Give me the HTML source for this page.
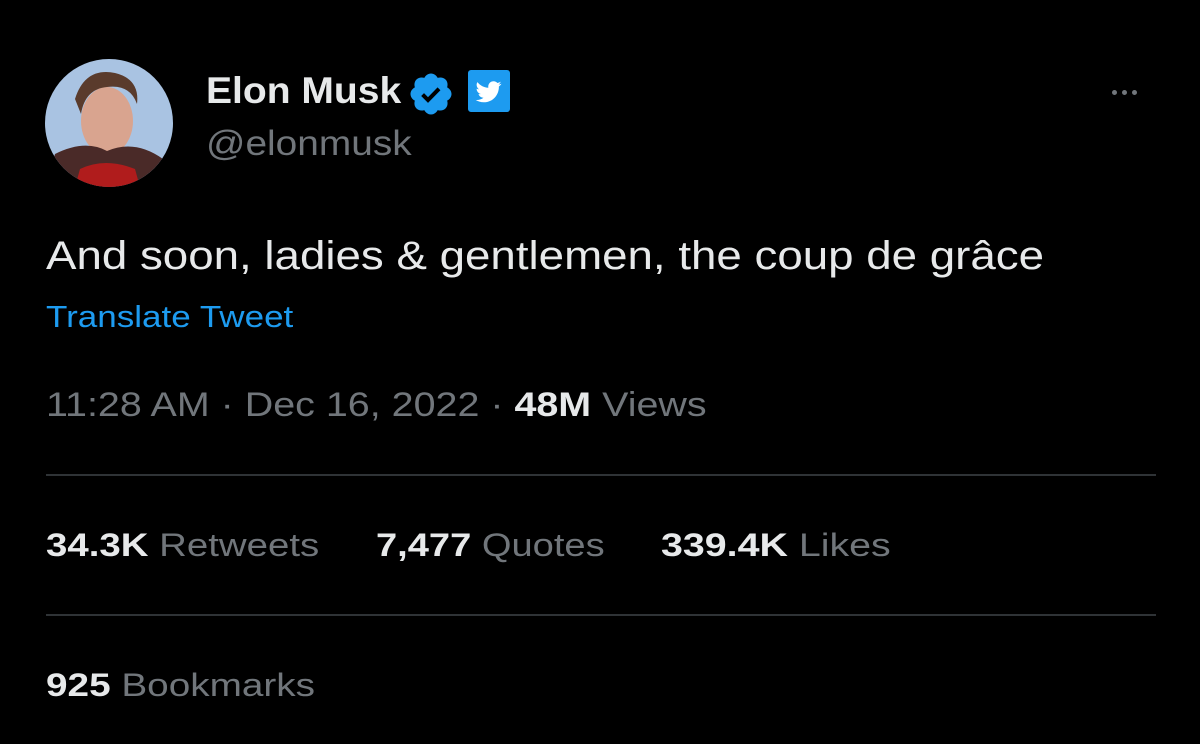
<!DOCTYPE html>
<html><head><style>
body{margin:0;width:1200px;height:744px;background:#000;overflow:hidden;font-family:"Liberation Sans",sans-serif;position:relative}
.a{position:absolute;white-space:nowrap;transform-origin:0 0}
.g{color:#71767b}
.w{color:#e7e9ea}
b{font-weight:bold;color:#e7e9ea}
.hr{position:absolute;left:46px;width:1110px;height:2px;background:#2f3336}
</style></head><body>
<div class="a" style="left:45px;top:59px;width:128px;height:128px;border-radius:50%;overflow:hidden;background:#a9c3e2">
<svg width="128" height="128"><ellipse cx="62" cy="62" rx="26" ry="34" fill="#d9a48f"/><path d="M30 40 Q40 8 70 14 Q95 20 92 45 Q85 25 62 28 Q40 30 36 55Z" fill="#5a3b2c"/><path d="M0 128 L10 95 Q40 80 62 92 Q90 80 118 100 L128 128Z" fill="#4a2a28"/><path d="M35 110 Q60 98 90 110 L95 128 L30 128Z" fill="#b01c1c"/></svg></div>
<div class="a w" style="left:206px;top:70px;font-size:37px;font-weight:bold;transform:scaleX(1.055)">Elon Musk</div>
<svg class="a" style="left:407px;top:70px" width="48" height="48" viewBox="0 0 24 24"><path fill="#1d9bf0" d="M22.25 12c0-1.43-.88-2.67-2.19-3.34.46-1.39.2-2.9-.81-3.91s-2.52-1.27-3.91-.81c-.66-1.31-1.91-2.19-3.34-2.19s-2.67.88-3.33 2.19c-1.4-.46-2.91-.2-3.92.81s-1.26 2.52-.8 3.91C2.63 9.33 1.75 10.57 1.75 12s.88 2.67 2.19 3.34c-.46 1.39-.2 2.9.81 3.91s2.52 1.26 3.91.81c.67 1.31 1.91 2.19 3.34 2.19s2.68-.88 3.34-2.19c1.39.46 2.9.2 3.91-.81s1.27-2.52.81-3.91c1.31-.67 2.19-1.91 2.19-3.34z"/><path d="M7.8 12.3l2.7 2.7 5.5-5.6" stroke="#000" stroke-width="2" fill="none"/></svg>
<div class="a" style="left:468px;top:70px;width:42px;height:42px;background:#1d9bf0;border-radius:3px"><svg width="42" height="42" viewBox="0 0 24 24"><path fill="#fff" transform="translate(4.5 5) scale(.62)" d="M23.6 4.6c-.9.4-1.8.6-2.8.8 1-.6 1.8-1.6 2.1-2.7-.9.6-2 1-3.1 1.2C19 2.9 17.7 2.3 16.3 2.3c-2.7 0-4.9 2.2-4.9 4.9 0 .4 0 .8.1 1.1C7.4 8.1 3.8 6.1 1.4 3.1c-.4.7-.7 1.6-.7 2.5 0 1.7.9 3.2 2.2 4.1-.8 0-1.6-.2-2.2-.6v.1c0 2.4 1.7 4.4 3.9 4.8-.4.1-.8.2-1.3.2-.3 0-.6 0-.9-.1.6 2 2.4 3.4 4.6 3.4-1.7 1.3-3.8 2.1-6.1 2.1-.4 0-.8 0-1.2-.1 2.2 1.4 4.8 2.2 7.5 2.2 9.1 0 14-7.5 14-14v-.6c1-.7 1.8-1.6 2.4-2.5z"/></svg></div>
<div class="a g" style="left:206px;top:124px;font-size:35px;transform:scaleX(1.11)">@elonmusk</div>
<div class="a" style="left:1112px;top:90px;font-size:0">
<span style="display:inline-block;width:5px;height:5px;border-radius:50%;background:#71767b;margin-right:5px"></span><span style="display:inline-block;width:5px;height:5px;border-radius:50%;background:#71767b;margin-right:5px"></span><span style="display:inline-block;width:5px;height:5px;border-radius:50%;background:#71767b"></span></div>
<div class="a w" style="left:46px;top:234px;font-size:40px;transform:scaleX(1.142)">And soon, ladies &amp; gentlemen, the coup de grâce</div>
<div class="a" style="left:46px;top:299px;font-size:31px;color:#1d9bf0;transform:scaleX(1.13)">Translate Tweet</div>
<div class="a g" style="left:46px;top:386px;font-size:34px;transform:scaleX(1.16)">11:28 AM · Dec 16, 2022 · <b>48M</b> Views</div>
<div class="hr" style="top:474px"></div>
<div class="a g" style="left:46px;top:527px;font-size:32px;transform:scaleX(1.2)"><b>34.3K</b> Retweets</div>
<div class="a g" style="left:376px;top:527px;font-size:32px;transform:scaleX(1.19)"><b>7,477</b> Quotes</div>
<div class="a g" style="left:661px;top:527px;font-size:32px;transform:scaleX(1.23)"><b>339.4K</b> Likes</div>
<div class="hr" style="top:614px"></div>
<div class="a g" style="left:46px;top:667px;font-size:32px;transform:scaleX(1.21)"><b>925</b> Bookmarks</div>
</body></html>
